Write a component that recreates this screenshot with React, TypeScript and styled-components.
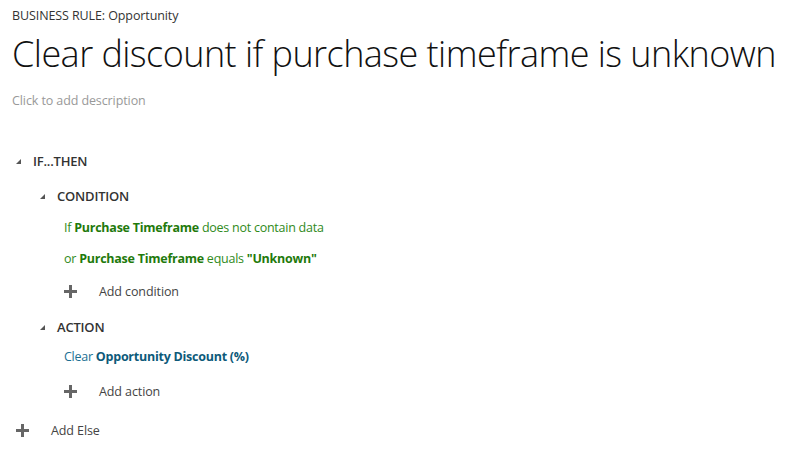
import React from "react";
import styled, { createGlobalStyle } from "styled-components";

const Global = createGlobalStyle`
  html, body { margin: 0; padding: 0; background: #fff; }
  body { font-family: "Open Sans", "Noto Sans", sans-serif; color: #444; }
`;

const Page = styled.div`
  width: 798px;
  height: 475px;
  padding: 7px 0 0 12px;
  box-sizing: border-box;
  overflow: hidden;
`;

const Kicker = styled.div`
  font-size: 12.5px;
  line-height: 18px;
  color: #333;
  letter-spacing: -0.1px;
`;

const Title = styled.h1`
  margin: 6px 0 0;
  font-weight: 300;
  font-size: 36px;
  line-height: 46px;
  color: #111;
  letter-spacing: -0.55px;
  white-space: nowrap;
`;

const Description = styled.div`
  margin-top: 15px;
  font-size: 12.5px;
  line-height: 18px;
  color: #999;
  letter-spacing: -0.1px;
`;

const Tree = styled.div`
  margin-top: 39px;
  display: flex;
  flex-direction: column;
`;

const Node = styled.div<{ $indent: number; $mt?: number }>`
  display: flex;
  flex-direction: column;
  padding-left: ${(p) => p.$indent}px;
  margin-top: ${(p) => p.$mt ?? 0}px;
`;

const Header = styled.div<{ $gap: number }>`
  display: flex;
  align-items: center;
  height: 24px;
  gap: ${(p) => p.$gap}px;
`;

const Toggle = styled.span`
  width: 0;
  height: 0;
  border-style: solid;
  border-width: 0 0 5px 5px;
  border-color: transparent transparent #555 transparent;
  margin-left: 4px;
`;

const HeaderLabel = styled.span`
  font-size: 13px;
  font-weight: 600;
  color: #333;
  letter-spacing: -0.2px;
`;

const Body = styled.div<{ $gapTop: number }>`
  display: flex;
  flex-direction: column;
  padding-top: ${(p) => p.$gapTop}px;
`;

const Line = styled.div<{ $tone: "green" | "blue"; $indent: number; $h: number }>`
  height: ${(p) => p.$h}px;
  display: flex;
  align-items: center;
  padding-left: ${(p) => p.$indent}px;
  font-size: 12.5px;
  letter-spacing: -0.25px;
  white-space: pre;
  color: ${(p) => (p.$tone === "green" ? "#2f8a1a" : "#1b6f93")};
  b {
    font-weight: 700;
    color: ${(p) => (p.$tone === "green" ? "#1f7a0c" : "#0d5a7a")};
  }
`;

const AddRow = styled.div<{ $indent: number; $h: number; $gap: number }>`
  height: ${(p) => p.$h}px;
  display: flex;
  align-items: center;
  padding-left: ${(p) => p.$indent}px;
  gap: ${(p) => p.$gap}px;
  font-size: 12.5px;
  color: #444;
  letter-spacing: -0.1px;
`;

const PlusIcon = () => (
  <svg width="13" height="13" viewBox="0 0 13 13">
    <rect x="5" y="0" width="3" height="13" fill="#666" />
    <rect x="0" y="5" width="13" height="3" fill="#666" />
  </svg>
);

export default function App() {
  return (
    <>
      <Global />
      <Page>
        <Kicker>BUSINESS RULE: Opportunity</Kicker>
        <Title>Clear discount if purchase timeframe is unknown</Title>
        <Description>Click to add description</Description>
        <Tree>
          <Node $indent={0}>
            <Header $gap={12}>
              <Toggle />
              <HeaderLabel>IF...THEN</HeaderLabel>
            </Header>
            <Body $gapTop={11}>
              <Node $indent={24}>
                <Header $gap={12}>
                  <Toggle />
                  <HeaderLabel>CONDITION</HeaderLabel>
                </Header>
                <Body $gapTop={4}>
                  <Line $tone="green" $indent={28} $h={31}>
                    If <b>Purchase Timeframe</b> does not contain data
                  </Line>
                  <Line $tone="green" $indent={28} $h={31}>
                    or <b>Purchase Timeframe</b> equals <b>"Unknown"</b>
                  </Line>
                  <AddRow $indent={28} $h={34} $gap={22}>
                    <PlusIcon />
                    <span>Add condition</span>
                  </AddRow>
                </Body>
              </Node>
              <Node $indent={24} $mt={7}>
                <Header $gap={12}>
                  <Toggle />
                  <HeaderLabel>ACTION</HeaderLabel>
                </Header>
                <Body $gapTop={0}>
                  <Line $tone="blue" $indent={28} $h={35}>
                    Clear <b>Opportunity Discount (%)</b>
                  </Line>
                  <AddRow $indent={28} $h={34} $gap={22}>
                    <PlusIcon />
                    <span>Add action</span>
                  </AddRow>
                </Body>
              </Node>
            </Body>
          </Node>
          <AddRow $indent={4} $h={44} $gap={22}>
            <PlusIcon />
            <span>Add Else</span>
          </AddRow>
        </Tree>
      </Page>
    </>
  );
}
